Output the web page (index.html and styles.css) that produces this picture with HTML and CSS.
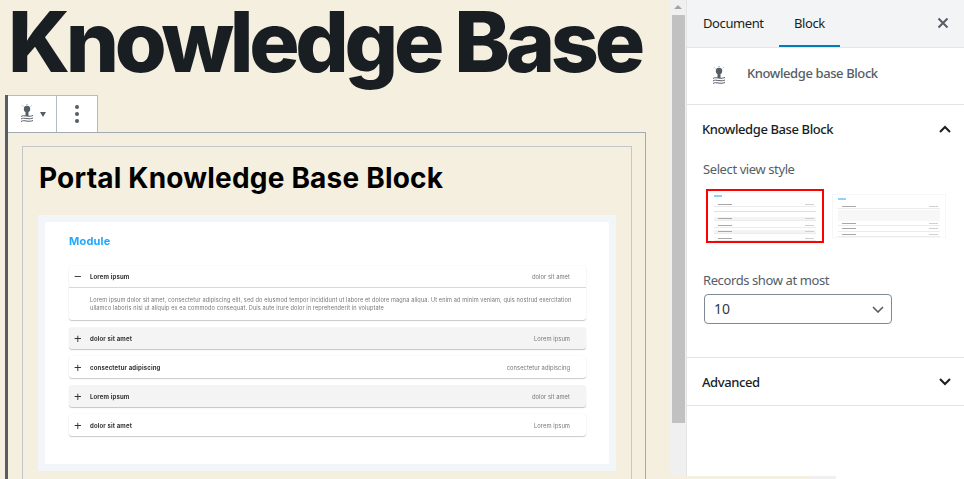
FILE: index.html
```html
<!DOCTYPE html>
<html lang="en">
<head>
    <meta charset="UTF-8">
    <meta name="viewport" content="width=device-width, initial-scale=1.0">
    <title>Knowledge Base</title>
    <link rel="stylesheet" href="styles.css">
</head>
<body>
    <div class="editor">
        <main class="canvas">
            <h1 class="pageTitle">Knowledge Base</h1>

            <div class="blockWrap">
                <div class="toolbar">
                    <button class="toolBtn toolBtn-switch">
                        <svg width="16" height="20" viewBox="0 0 16 20"><use href="#lamp"/></svg>
                        <span class="caret"></span>
                    </button>
                    <button class="toolBtn toolBtn-more">
                        <span class="dot"></span><span class="dot"></span><span class="dot"></span>
                    </button>
                </div>

                <div class="blockOuter">
                    <div class="blockInner">
                        <h2 class="blockTitle">Portal Knowledge Base Block</h2>

                        <div class="preview">
                            <div class="previewCard">
                                <h3 class="moduleName">Module</h3>

                                <div class="row row-open">
                                    <div class="rowHead">
                                        <span class="sign">&minus;</span>
                                        <span class="rowName">Lorem ipsum</span>
                                        <span class="rowMeta">dolor sit amet</span>
                                    </div>
                                    <p class="rowBody">Lorem ipsum dolor sit amet, consectetur adipiscing elit, sed do eiusmod tempor incididunt ut labore et dolore magna aliqua. Ut enim ad minim veniam, quis nostrud exercitation ullamco laboris nisi ut aliquip ex ea commodo consequat. Duis aute irure dolor in reprehenderit in voluptate</p>
                                </div>
                                <div class="row row-grey">
                                    <div class="rowHead">
                                        <span class="sign">+</span>
                                        <span class="rowName">dolor sit amet</span>
                                        <span class="rowMeta">Lorem ipsum</span>
                                    </div>
                                </div>
                                <div class="row">
                                    <div class="rowHead">
                                        <span class="sign">+</span>
                                        <span class="rowName">consectetur adipiscing</span>
                                        <span class="rowMeta">consectetur adipiscing</span>
                                    </div>
                                </div>
                                <div class="row row-grey">
                                    <div class="rowHead">
                                        <span class="sign">+</span>
                                        <span class="rowName">Lorem ipsum</span>
                                        <span class="rowMeta">dolor sit amet</span>
                                    </div>
                                </div>
                                <div class="row">
                                    <div class="rowHead">
                                        <span class="sign">+</span>
                                        <span class="rowName">dolor sit amet</span>
                                        <span class="rowMeta">Lorem ipsum</span>
                                    </div>
                                </div>
                            </div>
                        </div>
                    </div>
                </div>
            </div>
        </main>

        <div class="scrollbar">
            <span class="scrollUp"></span>
            <span class="scrollThumb"></span>
        </div>

        <aside class="sidebar">
            <div class="tabs">
                <span class="tab tab-document">Document</span>
                <span class="tab tab-active">Block</span>
                <svg class="closeIcon" width="12" height="12" viewBox="0 0 12 12"><path d="M1.500 1.500l9 9M10.500 1.500l-9 9" stroke="#555d66" stroke-width="2" fill="none"/></svg>
            </div>

            <div class="blockCard">
                <svg width="16" height="20" viewBox="0 0 16 20"><use href="#lamp"/></svg>
                <span class="blockCardName">Knowledge base Block</span>
            </div>

            <section class="panel panel-open">
                <div class="panelHead">
                    <span>Knowledge Base Block</span>
                    <svg width="12" height="8" viewBox="0 0 12 8"><path d="M1 7l5-5 5 5" stroke="#191e23" stroke-width="2" fill="none"/></svg>
                </div>
                <div class="fieldLabel">Select view style</div>
                <div class="styles">
                    <div class="thumb thumb-selected">
                        <div class="thumbTitle"></div>
                        <div class="thumbRow"><i></i><b></b></div>
                        <div class="thumbText"></div>
                        <div class="thumbRow thumbRow-grey"><i></i><b></b></div>
                        <div class="thumbRow"><i></i><b></b></div>
                        <div class="thumbRow thumbRow-grey"><i></i><b></b></div>
                        <div class="thumbRow"><i></i><b></b></div>
                    </div>
                    <div class="thumb thumb-plain">
                        <div class="thumbTitle"></div>
                        <div class="thumbRow"><i></i><b></b></div>
                        <div class="thumbText thumbText-grey"></div>
                        <div class="thumbRow"><i></i><b></b></div>
                        <div class="thumbRow"><i></i><b></b></div>
                        <div class="thumbRow"><i></i><b></b></div>
                    </div>
                </div>
                <div class="fieldLabel fieldLabel-records">Records show at most</div>
                <div class="selectBox">
                    <span class="selectValue">10</span>
                    <svg width="12" height="7" viewBox="0 0 12 7"><path d="M1 1l5 5 5-5" stroke="#555d66" stroke-width="1.600" fill="none"/></svg>
                </div>
            </section>

            <section class="panel">
                <div class="panelHead panelHead-closed">
                    <span>Advanced</span>
                    <svg width="12" height="8" viewBox="0 0 12 8"><path d="M1 1l5 5 5-5" stroke="#191e23" stroke-width="2" fill="none"/></svg>
                </div>
            </section>

            <div class="bottomStrip">
                <span class="stripBeige"></span>
                <span class="stripGrey"></span>
            </div>
        </aside>
    </div>

    <svg class="sprites" width="0" height="0">
        <symbol id="lamp" viewBox="0 0 16 20">
            <circle cx="8" cy="5" r="3.200" fill="#555d66"/>
            <rect x="6.500" y="7" width="3" height="5" fill="#555d66"/>
            <path d="M8 .2v.9M3.400 1.600l.7.7M12.600 1.600l-.7.7" stroke="#555d66" stroke-width=".8"/>
            <path d="M2 12.500c2-1.200 3-.8 6-.4s4.500 0 6-.6M2 15c2-1.200 3-.8 6-.4s4.500 0 6-.6M2 17.500c2-1.200 3-.8 6-.4s4.500 0 6-.6" stroke="#555d66" stroke-width="1" fill="none"/>
        </symbol>
    </svg>
</body>
</html>
```

FILE: styles.css
```css
html, body {
    margin: 0;
    height: 100%;
    overflow: hidden;
}

body {
    background-color: #f5efe0;
    font-family: "Noto Sans", "Open Sans", sans-serif;
    font-size: 13px;
    letter-spacing: -.4px;
    color: #191e23;
}

.sprites {
    display: block;
    height: 0;
}

.editor {
    display: flex;
    height: 479px;
}

/* left canvas */
.canvas {
    width: 670px;
    flex-shrink: 0;
    height: 479px;
    overflow: hidden;
}

.pageTitle {
    margin: 0;
    padding: 2px 0 0 8px;
    height: 95px;
    box-sizing: border-box;
    font-family: Inter, "Liberation Sans", sans-serif;
    font-size: 84px;
    font-weight: 800;
    line-height: 80px;
    letter-spacing: -4.3px;
    white-space: nowrap;
    color: #191e23;
}

.blockWrap {
    margin-left: 5px;
    border-left: 3px solid #555d66;
    width: 638px;
    height: 384px;
}

.toolbar {
    display: flex;
    height: 37px;
}

.toolBtn {
    display: flex;
    align-items: center;
    justify-content: center;
    padding: 0;
    background-color: #fff;
    border: 1px solid #b5bcc2;
    border-bottom: none;
    height: 37px;
    box-sizing: border-box;
}

.toolBtn-switch {
    width: 49px;
    gap: 5px;
    border-left: none;
}

.toolBtn-more {
    width: 41px;
    border-left: none;
    flex-direction: column;
    gap: 3px;
}

.caret {
    border-left: 3px solid transparent;
    border-right: 3px solid transparent;
    border-top: 5px solid #555d66;
}

.dot {
    width: 4px;
    height: 4px;
    border-radius: 50%;
    background-color: #555d66;
}

.blockOuter {
    border-top: 1px solid #a2aab2;
    border-right: 1px solid #a2aab2;
    padding: 13px 13px 0 14px;
    height: 400px;
    box-sizing: border-box;
}

.blockInner {
    border: 1px solid #c3c7ca;
    border-bottom: none;
    height: 400px;
    padding: 0 15px 0 15px;
}

.blockTitle {
    margin: 0;
    padding: 14px 0 0 1px;
    height: 54px;
    font-family: Inter, "Liberation Sans", sans-serif;
    font-size: 28px;
    font-weight: 700;
    line-height: 34px;
    letter-spacing: .2px;
    color: #000;
    white-space: nowrap;
}

/* screenshot of the front-end module */
.preview {
    background-color: #f3f6f9;
    padding: 7px;
    height: 242px;
}

.previewCard {
    background-color: #fff;
    border-radius: 2px;
    height: 242px;
    padding: 0 23px 0 24px;
    font-family: Inter, sans-serif;
    letter-spacing: 0;
    color: #333;
    filter: blur(.3px);
}

.moduleName {
    margin: 0;
    padding-top: 12px;
    height: 32px;
    font-size: 11px;
    font-weight: 700;
    line-height: 15px;
    letter-spacing: .2px;
    color: #1fa8ff;
}

.row {
    background-color: #fff;
    border-radius: 3px;
    box-shadow: 0 1px 1px #c9c9c9, 0 0 2px #f0f0f0;
    margin-bottom: 7px;
}

.row-grey {
    background-color: #f4f4f4;
    box-shadow: 0 1px 1px #c4c4c4;
}

.rowHead {
    display: flex;
    align-items: center;
    height: 22px;
    padding: 0 16px 0 5px;
}

.row-open .rowHead {
    height: 21px;
    border-bottom: 1px solid #d8d8d8;
}

.sign {
    width: 16px;
    font-size: 13px;
    font-family: "Liberation Sans", sans-serif;
    line-height: 1;
    color: #333;
}

.rowName {
    flex: 1;
    font-size: 6px;
    font-weight: 700;
    letter-spacing: .15px;
    color: #333;
}

.rowMeta {
    font-size: 5.800px;
    letter-spacing: .05px;
    color: #777;
}

.rowBody {
    margin: 0;
    padding: 8px 10px 6px 21px;
    height: 18px;
    font-size: 5.600px;
    line-height: 8px;
    letter-spacing: .11px;
    color: #777;
}

/* fake scrollbar of the canvas */
.scrollbar {
    width: 16px;
    flex-shrink: 0;
    height: 476px;
    background-color: #f0f0f0;
    display: flex;
    flex-direction: column;
    align-items: center;
    padding-top: 5px;
    box-sizing: border-box;
}

.scrollUp {
    border-left: 4px solid transparent;
    border-right: 4px solid transparent;
    border-bottom: 4px solid #a3a3a3;
    margin-bottom: 6px;
}

.scrollThumb {
    width: 13px;
    height: 408px;
    background-color: #c1c1c1;
}

/* settings sidebar */
.sidebar {
    flex: 1;
    background-color: #fff;
    height: 479px;
    display: flex;
    flex-direction: column;
    box-shadow: inset 1px 0 0 #e2e4e7;
    padding-left: 1px;
}

.tabs {
    display: flex;
    align-items: stretch;
    height: 47px;
    flex-shrink: 0;
    background-color: #f3f4f5;
    border-bottom: 1px solid #e2e4e7;
    padding-left: 16px;
}

.tab {
    line-height: 46px;
    color: #191e23;
}

.tab-document {
    width: 60px;
}

.tab-active {
    margin-left: 16px;
    padding: 0 15px;
    box-sizing: border-box;
    width: 61px;
    height: 47px;
    border-bottom: 2px solid #007cba;
}

.closeIcon {
    align-self: center;
    margin-left: 97px;
    margin-top: -1px;
}

.blockCard {
    display: flex;
    align-items: center;
    flex-shrink: 0;
    height: 56px;
    border-bottom: 1px solid #e2e4e7;
    padding-left: 24px;
    gap: 20px;
}

.blockCardName {
    color: #555d66;
    font-weight: 500;
    margin-bottom: 7px;
}

.panel {
    border-bottom: 1px solid #e2e4e7;
    padding: 0 16px;
    flex-shrink: 0;
}

.panel-open {
    height: 252px;
}

.panelHead {
    display: flex;
    align-items: center;
    justify-content: space-between;
    height: 48px;
    margin-left: -1px;
    font-weight: 500;
}

.panelHead svg {
    margin-right: -3px;
}

.panelHead-closed {
    height: 47px;
}

.fieldLabel {
    height: 18px;
    line-height: 18px;
    padding-top: 7px;
    color: #555d66;
}

.styles {
    display: flex;
    align-items: center;
    gap: 8px;
    margin: 11px 0 0 3px;
    height: 54px;
}

.thumb {
    box-sizing: border-box;
    display: flex;
    flex-direction: column;
}

.thumbTitle, .thumbRow, .thumbText {
    filter: blur(.5px);
}

.thumb-selected {
    width: 118px;
    height: 54px;
    border: 2px solid #f00;
    padding: 4px 6px 0 6px;
    gap: 2px;
}

.thumb-plain {
    width: 114px;
    height: 44px;
    border: 1px solid #f5f7f9;
    padding: 3px 5px 0 5px;
    gap: 1px;
}

.thumbTitle {
    width: 8px;
    height: 2px;
    background-color: #8fd2fb;
    margin-bottom: 4px;
}

.thumbRow {
    display: flex;
    justify-content: space-between;
    align-items: center;
    height: 4px;
    padding: 0 2px 0 4px;
    border-bottom: 1px solid #ececec;
}

.thumbRow-grey {
    background-color: #f4f4f4;
}

.thumbRow i {
    width: 14px;
    height: 1px;
    background-color: #a8a8a8;
}

.thumbRow b {
    width: 9px;
    height: 1px;
    background-color: #d0d0d0;
}

.thumbText {
    height: 6px;
    background: linear-gradient(#fff 2px, #e0e0e0 2px, #e0e0e0 3px, #fff 3px);
}

.thumbText-grey {
    height: 13px;
    background: #f7f7f7;
}

.fieldLabel-records {
    padding-top: 0;
    margin-top: 28px;
}

.selectBox {
    display: flex;
    align-items: center;
    justify-content: space-between;
    margin: 5px 0 0 1px;
    width: 188px;
    height: 30px;
    box-sizing: border-box;
    border: 1px solid #7e8993;
    border-radius: 4px;
    padding: 0 7px 0 9px;
    font-size: 14px;
    letter-spacing: 0;
    color: #32373c;
}

.selectValue {
    margin-bottom: 1px;
}

.bottomStrip {
    display: flex;
    margin: auto 0 0 -1px;
    height: 3px;
}

.stripBeige {
    width: 126px;
    background-color: #f5efe0;
}

.stripGrey {
    width: 24px;
    background-color: #f0f0f0;
}
```
